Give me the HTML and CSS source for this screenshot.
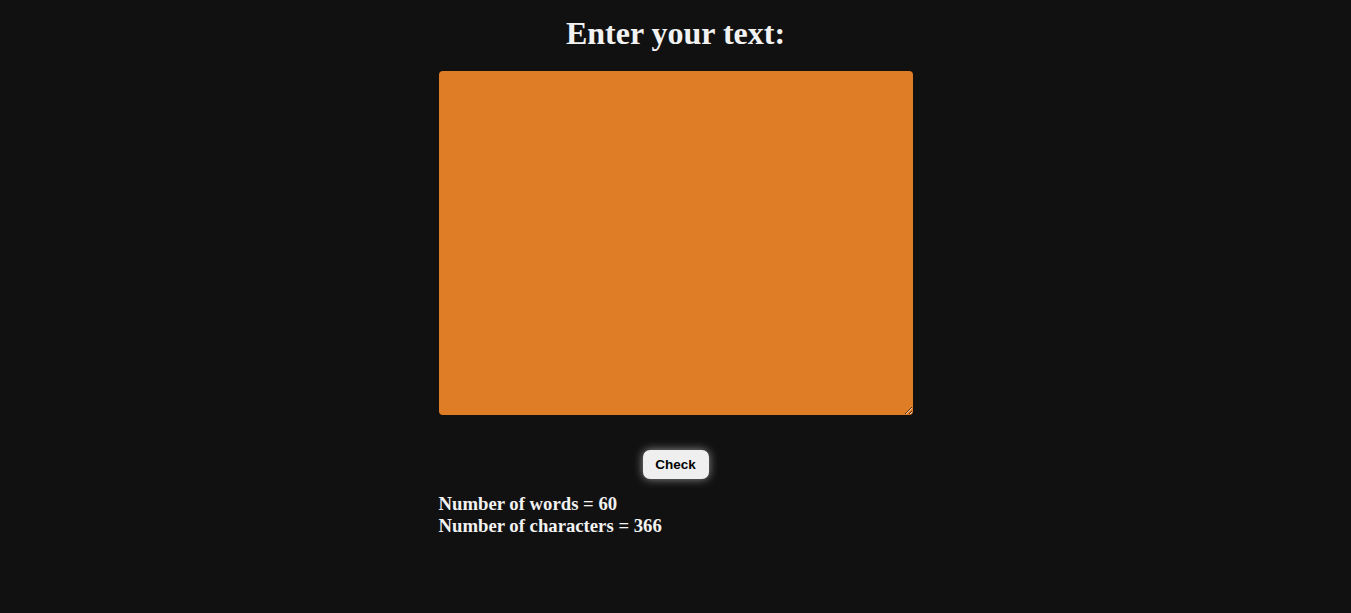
FILE: index.html
```html
<!DOCTYPE html>
<html>
<head>
<meta charset="utf-8">
<link rel="stylesheet" href="styles.css">
</head>
<body>
<div class="wrap">
  <h1 class="title">Enter your text:</h1>
  <textarea class="box"></textarea>
  <div class="actions"><button class="btn">Check</button></div>
  <div class="result">
    <div>Number of words = 60</div>
    <div>Number of characters = 366</div>
  </div>
</div>
</body>
</html>
```
FILE: styles.css
```css
html, body {
  margin: 0;
  padding: 0;
  background: #111111;
}
body {
  font-family: "Liberation Serif", "Times New Roman", serif;
  color: #f2f2f2;
}
.wrap {
  width: 474px;
  margin: 0 auto;
  padding-top: 15px;
  display: flex;
  flex-direction: column;
}
.title {
  margin: 0;
  text-align: center;
  font-size: 32px;
  font-weight: bold;
  line-height: 36px;
}
.box {
  margin-top: 20px;
  width: 474px;
  height: 344px;
  box-sizing: border-box;
  background: #df7c26;
  border: none;
  border-radius: 4px;
  outline: none;
  display: block;
}
.actions {
  display: flex;
  justify-content: center;
  margin-top: 35px;
}
.btn {
  width: 66px;
  height: 29px;
  background: #efefef;
  border: none;
  border-radius: 7px;
  box-shadow: 0 0 10px rgba(255, 255, 255, 0.55);
  font-family: "Liberation Sans", Arial, sans-serif;
  font-weight: bold;
  font-size: 13.5px;
  color: #000;
  padding: 0;
}
.result {
  margin-top: 14px;
  font-size: 18.72px;
  font-weight: bold;
  line-height: 22px;
}
```
